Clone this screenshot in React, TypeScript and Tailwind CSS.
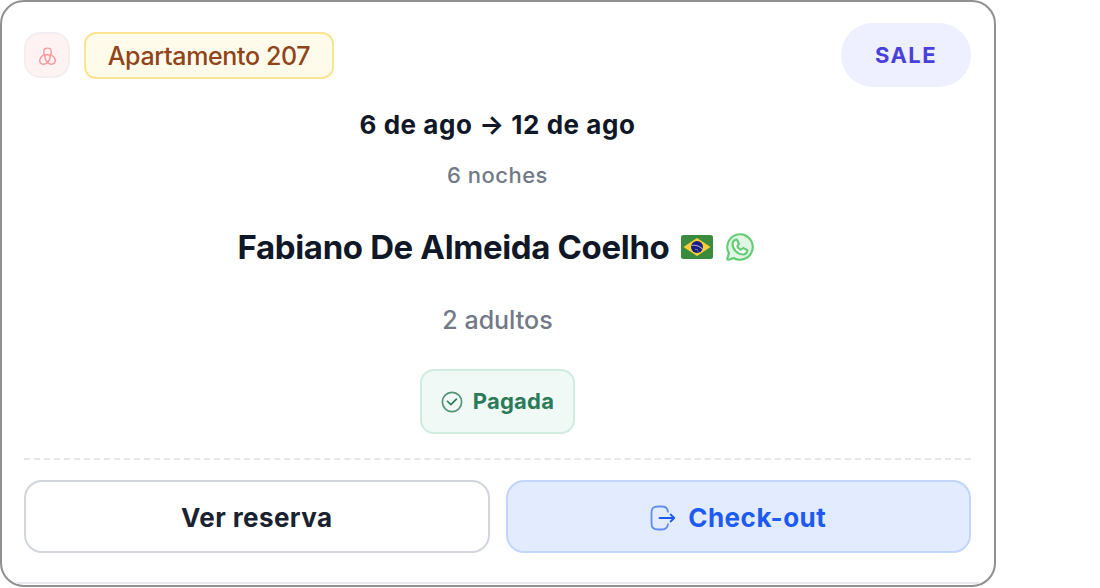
import type { ReactNode } from 'react'
import { PiWhatsappLogoDuotone } from 'react-icons/pi'

const AirbnbIcon = () => (
  <svg
    viewBox="0 0 24 24"
    className="mt-0.5 size-[19px]"
    fill="none"
    stroke="currentColor"
    strokeWidth={1.8}
    strokeLinecap="round"
    strokeLinejoin="round"
  >
    <path d="M12 19.500C9 16 8.500 14.500 8.500 13a3.500 3.500 0 0 1 7 0c0 1.500-.5 3-3.500 6.500Z" />
    <path d="M12 19.500c-1.600 1.600-3.200 2.300-5 2.300-2.700 0-4.800-1.600-4.800-4.300 0-3 2-5.500 5-7.500M12 19.500c1.600 1.600 3.200 2.300 5 2.300 2.700 0 4.800-1.600 4.800-4.300 0-3-2-5.500-5-7.500" />
    <path d="M8.700 11.500C7.600 9.200 7.200 7.500 7.200 6c0-2.700 2-4.600 4.800-4.600S16.800 3.300 16.800 6c0 1.500-.4 3.200-1.500 5.500" />
  </svg>
)

const BrazilFlag = () => (
  <svg viewBox="0 0 32 24" className="h-6 w-8">
    <rect width="32" height="24" rx="2.500" fill="#3b8b3f" />
    <path d="M2.500 12 16 3l13.500 9L16 21Z" fill="#fbcf34" />
    <circle cx="16" cy="12" r="6" fill="#1b1d83" />
    <path d="M10.500 10.500c4-.8 8 .4 11 3.500" fill="none" stroke="#a9a9d2" strokeWidth="1.100" />
    <path d="M14 14.500h3M16 16.200h1.500" stroke="#8183bd" strokeWidth=".8" />
  </svg>
)

const CheckBadgeIcon = () => (
  <svg
    viewBox="0 0 24 24"
    className="size-[22px] shrink-0"
    fill="none"
    stroke="currentColor"
    strokeWidth={1.8}
    strokeLinecap="round"
    strokeLinejoin="round"
  >
    <circle cx="12" cy="12" r="10.500" strokeOpacity=".8" />
    <path d="m7 11.200 3.800 3.600 6-5.900" />
  </svg>
)

const LogoutIcon = () => (
  <svg
    viewBox="0 0 26 26"
    className="size-[26px] shrink-0"
    fill="none"
    stroke="currentColor"
    strokeWidth={1.8}
    strokeLinecap="round"
    strokeLinejoin="round"
  >
    <path
      d="M18 6.800C17.600 3 15.800 1.500 12 1.500H8C3.500 1.500 1.500 3 1.500 7.500v11C1.500 23 3.500 24.500 8 24.500h4c3.800 0 5.600-1.500 6-5.300"
      strokeOpacity=".65"
    />
    <path d="M9.500 13h14.500M20.600 9.500 24.300 13l-3.700 3.500" />
  </svg>
)

const ActionButton = ({
  className,
  children,
}: {
  className: string
  children: ReactNode
}) => (
  <button
    type="button"
    className={`flex h-[73px] flex-1 items-center justify-center rounded-[18px] border-2 pt-0.5 text-[26px] leading-8 font-bold ${className}`}
  >
    {children}
  </button>
)

export default function App() {
  return (
    <div className="h-[588px] bg-white font-['Inter',sans-serif]">
      <article className="flex h-[587px] w-[996px] flex-col rounded-[24px] border-2 border-[#909090] pt-[21px] pr-[23px] pl-[22px]">
        <header className="flex h-16 items-center justify-between">
          <div className="flex items-center gap-3.5">
            <span className="flex size-[46px] items-center justify-center rounded-2xl border-2 border-[#f3eef2] bg-[#fef2f2] text-[#fb9a9c]">
              <AirbnbIcon />
            </span>
            <span className="mt-px flex h-[47px] w-[250px] items-center justify-center rounded-xl border-2 border-[#fbe593] bg-[#fffbeb] pt-0.5 text-[25px] font-medium tracking-[-0.35px] text-[#8f4419]">
              Apartamento 207
            </span>
          </div>
          <span className="flex h-16 w-[130px] items-center justify-center rounded-full bg-[#eeefff] text-[22px] font-bold tracking-[1.4px] text-[#4a41dd]">
            SALE
          </span>
        </header>

        <div className="flex flex-col items-center">
          <p className="mt-[22px] text-[26px] leading-8 font-bold tracking-[0.55px] text-[#101828]">
            6 de ago → 12 de ago
          </p>
          <p className="mt-[18px] text-[22px] leading-8 font-medium tracking-[0.5px] text-[#727987]">
            6 noches
          </p>
          <div className="mt-8 flex h-12 items-center gap-3">
            <h2 className="text-[33px] leading-10 font-bold tracking-[-0.36px] text-[#101828]">
              Fabiano De Almeida Coelho
            </h2>
            <BrazilFlag />
            <PiWhatsappLogoDuotone className="-ml-0.5 size-[34px] text-[#62cc72]" />
          </div>
          <p className="mt-[33px] text-[25px] leading-8 font-medium text-[#727987]">
            2 adultos
          </p>
          <div className="mt-[33px] flex h-[65px] w-[155px] items-center justify-center gap-2.5 rounded-[14px] border-2 border-[#d0ecdf] bg-[#f0f9f5] text-[22px] font-bold tracking-[0.2px] text-[#2b7a58]">
            <CheckBadgeIcon />
            Pagada
          </div>
        </div>

        <div className="mt-6 border-t-2 border-dashed border-[#e5e7eb]" />

        <footer className="mt-5 flex gap-4">
          <ActionButton className="border-[#d3d6dd] bg-white tracking-[0.4px] text-[#1a2230]">
            Ver reserva
          </ActionButton>
          <ActionButton className="gap-3 border-[#c2d5fd] bg-[#e3ecff] tracking-[0.5px] text-[#1d5bf2]">
            <LogoutIcon />
            Check-out
          </ActionButton>
        </footer>
        <div className="mt-auto -mr-[9px] -ml-2 h-0.5 bg-[#e9eaee]" />
        <div className="h-px" />
      </article>
    </div>
  )
}
